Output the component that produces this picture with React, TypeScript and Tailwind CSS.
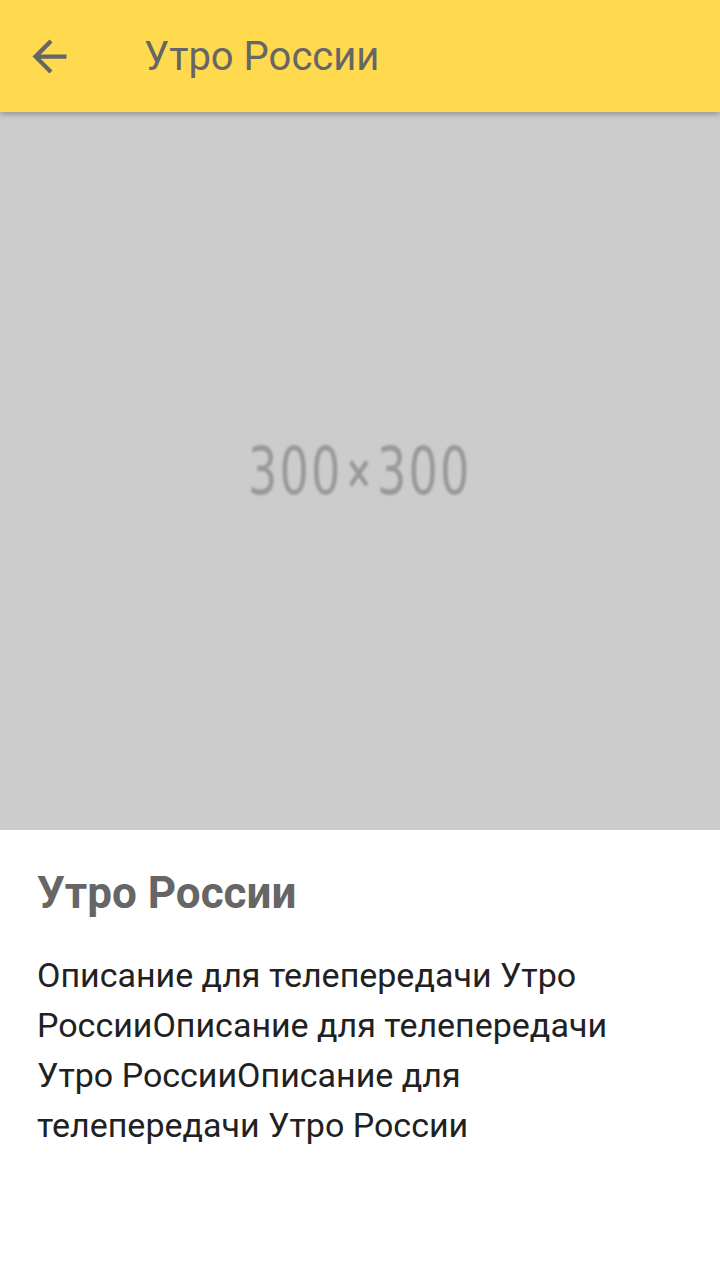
const DESCRIPTION =
  'Описание для телепередачи Утро РоссииОписание для телепередачи Утро РоссииОписание для телепередачи Утро России';

const BackIcon = function () {
  return (
    <svg viewBox="0 0 24 24" className="h-[51px] w-[51px] fill-[#666666]">
      <path d="M20 11H7.83l5.59-5.59L12 4l-8 8 8 8 1.41-1.41L7.83 13H20v-2z" />
    </svg>
  );
};

const App = function () {
  return (
    <div className="flex min-h-[1280px] w-[720px] flex-col bg-white font-['Roboto',sans-serif]">
      <header className="relative z-10 flex h-[112px] items-center bg-[#ffda4f] shadow-[0_2px_6px_rgba(0,0,0,0.3)]">
        <div className="ml-[24px] mt-[1px] flex">
          <BackIcon />
        </div>
        <h1 className="ml-[69px] mt-[2px] text-[40px] leading-none text-[#666666]">Утро России</h1>
      </header>
      <div className="flex h-[718px] items-center justify-center bg-[#cccccc]">
        <span className="mt-[2px] flex origin-center scale-x-[0.7] items-center font-['DejaVu_Sans',sans-serif] text-[66px] font-medium leading-none tracking-[3px] text-[#999999] blur-[1.2px]">
          300<span className="mx-[4px] text-[46px] font-bold">×</span>300
        </span>
      </div>
      <section className="px-[37px] pt-[38px]">
        <h2 className="text-[44px] font-bold leading-[50px] text-[#666666]">Утро России</h2>
        <p className="mt-[32px] text-[34px] leading-[50px] text-[#212121]">{DESCRIPTION}</p>
      </section>
    </div>
  );
};

export default App;
